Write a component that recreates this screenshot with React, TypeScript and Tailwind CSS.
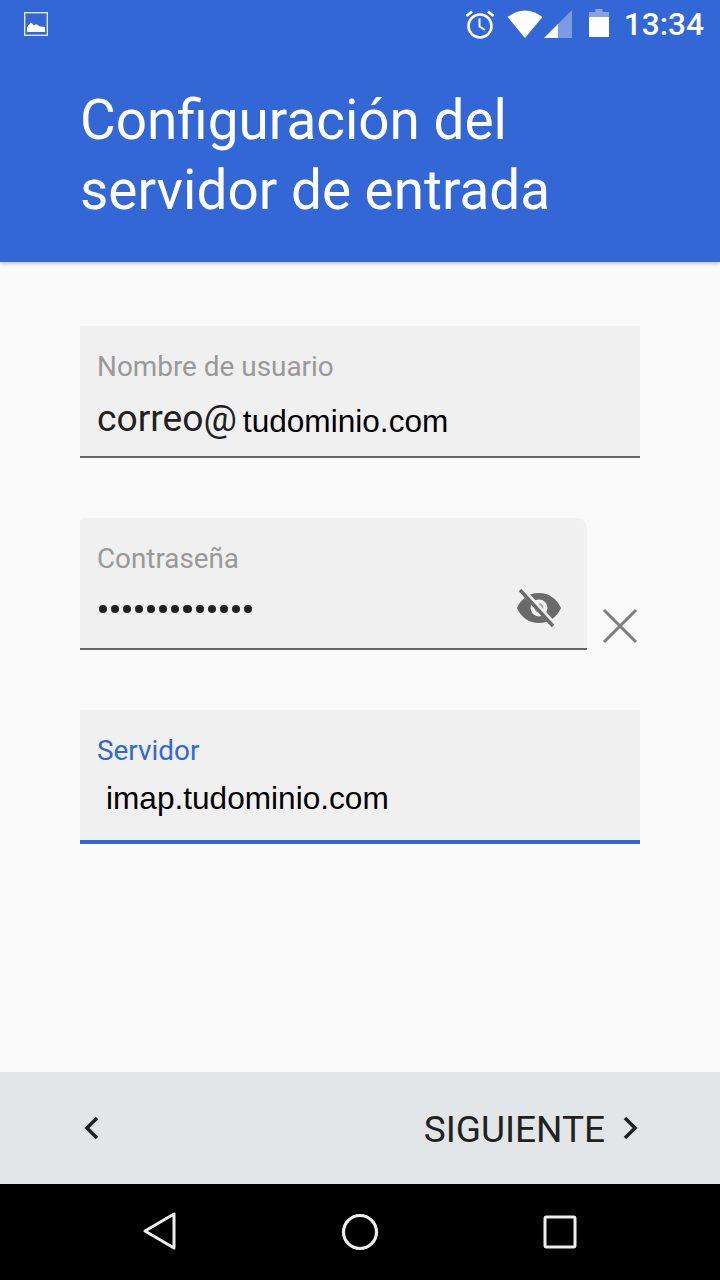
export default function App() {
  return (
    <div className="w-[720px] h-[1280px] flex flex-col bg-[#fafafa] overflow-hidden font-['Roboto',sans-serif]">
      <header className="h-[262px] shrink-0 bg-[#3367d6] shadow-[0_1px_4px_rgba(0,0,0,0.3)] z-10 flex flex-col">
        <div className="h-[50px] flex items-center px-[16px] text-white">
          <svg width="24" height="24" viewBox="0 0 24 24" className="mr-auto -mt-[2px] ml-[8px]">
            <rect x="0.7" y="0.7" width="22.6" height="22.6" fill="none" stroke="#fff" strokeOpacity="0.85" strokeWidth="1.4" />
            <path d="M3 20 V15 L7 10.5 L10 13.5 L12 12 L16 14.5 L21 15 V20 Z" fill="#fff" />
          </svg>
          <svg width="32" height="32" viewBox="0 0 32 32" className="-mt-[2px]">
            <circle cx="16" cy="18" r="11.5" fill="none" stroke="#fff" strokeWidth="2.6" />
            <path d="M15.5 10.5 V18.5 L21 22" fill="none" stroke="#fff" strokeWidth="2" />
            <path d="M2.5 8 L8 3.5 M29.5 8 L24 3.5" stroke="#fff" strokeWidth="2.8" />
          </svg>
          <svg width="36" height="30" viewBox="0 0 36 30" className="ml-[11px] -mt-[2px]">
            <path d="M18 29 L0.5 8 Q18 -5 35.5 8 Z" fill="#fff" />
          </svg>
          <svg width="28" height="30" viewBox="0 0 28 30" className="ml-[1px] -mt-[2px]">
            <path d="M0 29 L28 1 V29 Z" fill="#fff" fillOpacity="0.35" />
            <path d="M0 29 L14 15 V29 Z" fill="#fff" />
          </svg>
          <svg width="20" height="28" viewBox="0 0 20 28" className="ml-[17px] -mt-[4px]">
            <path d="M6.5 0 H13.5 V3 H20 V8 H0 V3 H6.5 Z" fill="#fff" fillOpacity="0.4" />
            <rect x="0" y="8" width="20" height="20" fill="#fff" />
          </svg>
          <span className="ml-[15px] text-[31.6px] leading-none font-medium">13:34</span>
        </div>
        <h1 className="mt-[35px] ml-[80px] text-[54.9px] leading-[70px] text-white font-normal">
          Configuración del<br />servidor de entrada
        </h1>
      </header>

      <main className="flex-1 flex flex-col px-[80px] pt-[64px] gap-[60px]">
        <div className="h-[132px] bg-[#f0f0f0] border-b-2 border-[#666] px-[17px] pt-[25px]">
          <div className="text-[27.9px] leading-[32px] text-[#999]">Nombre de usuario</div>
          <div className="mt-[14px] flex items-baseline text-[#212121] text-[37.2px] leading-[42px]">
            correo@
            <span className="ml-[6px] relative top-[1px] font-['Liberation_Sans',sans-serif] text-[31.6px] text-black">tudominio.com</span>
          </div>
        </div>

        <div className="flex items-end w-[560px]">
          <div className="w-[507px] h-[132px] bg-[#f0f0f0] border-b-2 border-[#666] rounded-tr-[10px] rounded-tl-[4px] px-[17px] pt-[25px] flex flex-col relative">
            <div className="text-[27.8px] leading-[32px] text-[#999]">Contraseña</div>
            <div className="mt-[30px] flex gap-[4px] pl-[1.5px]">
              {Array.from({ length: 13 }).map((_, i) => (
                <span key={i} className="w-[8.15px] h-[8px] rounded-full bg-[#212121]" />
              ))}
            </div>
            <svg width="46" height="40" viewBox="0 0 46 40" className="absolute right-[25px] top-[70px]">
              <path fillRule="evenodd" d="M23 5 C33 5 41 11 45 20 C41 29 33 35 23 35 C13 35 5 29 1 20 C5 11 13 5 23 5 Z M23 11.5 A8.5 8.5 0 1 0 23 28.5 A8.5 8.5 0 1 0 23 11.5 Z" fill="#6a6a6a" />
              <circle cx="23" cy="20" r="4.5" fill="#6a6a6a" fillOpacity="0.6" />
              <path d="M5 1 L38 37" stroke="#f0f0f0" strokeWidth="6" />
              <path d="M4 2 L37 38" stroke="#6a6a6a" strokeWidth="3.4" />
            </svg>
          </div>
          <svg width="36" height="36" viewBox="0 0 36 36" className="ml-[15px] mb-[6px]">
            <path d="M2 2 L34 34 M34 2 L2 34" stroke="#7d7d7d" strokeWidth="3" />
          </svg>
        </div>

        <div className="h-[134px] bg-[#f0f0f0] border-b-4 border-[#3367d6] px-[17px] pt-[25px]">
          <div className="text-[27.9px] leading-[32px] text-[#3367d6]">Servidor</div>
          <div className="mt-[13px] ml-[9px] font-['Liberation_Sans',sans-serif] text-[31.6px] leading-[36px] text-black">imap.tudominio.com</div>
        </div>
      </main>

      <nav className="h-[112px] shrink-0 bg-[#e2e6e9] flex items-center pl-[80px] pr-[80px] justify-between text-[#212121]">
        <svg width="24" height="28" viewBox="0 0 24 28">
          <path d="M17 4 L7 14 L17 24" fill="none" stroke="#212121" strokeWidth="3.6" />
        </svg>
        <div className="flex items-center -mr-[2px]">
          <span className="text-[37px] leading-none mt-[3px]">SIGUIENTE</span>
          <svg width="24" height="28" viewBox="0 0 24 28" className="ml-[13px]">
            <path d="M7 4 L17 14 L7 24" fill="none" stroke="#212121" strokeWidth="3.6" />
          </svg>
        </div>
      </nav>

      <footer className="h-[96px] shrink-0 bg-black flex items-center justify-center">
        <svg width="36" height="40" viewBox="0 0 36 40" className="mr-[163px] -ml-[2px] -mt-[2px]">
          <path d="M32 3 V37 L3 20 Z" fill="none" stroke="#eee" strokeWidth="3" strokeLinejoin="round" />
        </svg>
        <svg width="38" height="38" viewBox="0 0 38 38" className="mr-[164px]">
          <circle cx="19" cy="19" r="16.5" fill="none" stroke="#eee" strokeWidth="3.2" />
        </svg>
        <svg width="34" height="34" viewBox="0 0 34 34">
          <rect x="2" y="2" width="30" height="30" rx="1.5" fill="none" stroke="#eee" strokeWidth="3" />
        </svg>
      </footer>
    </div>
  );
}
